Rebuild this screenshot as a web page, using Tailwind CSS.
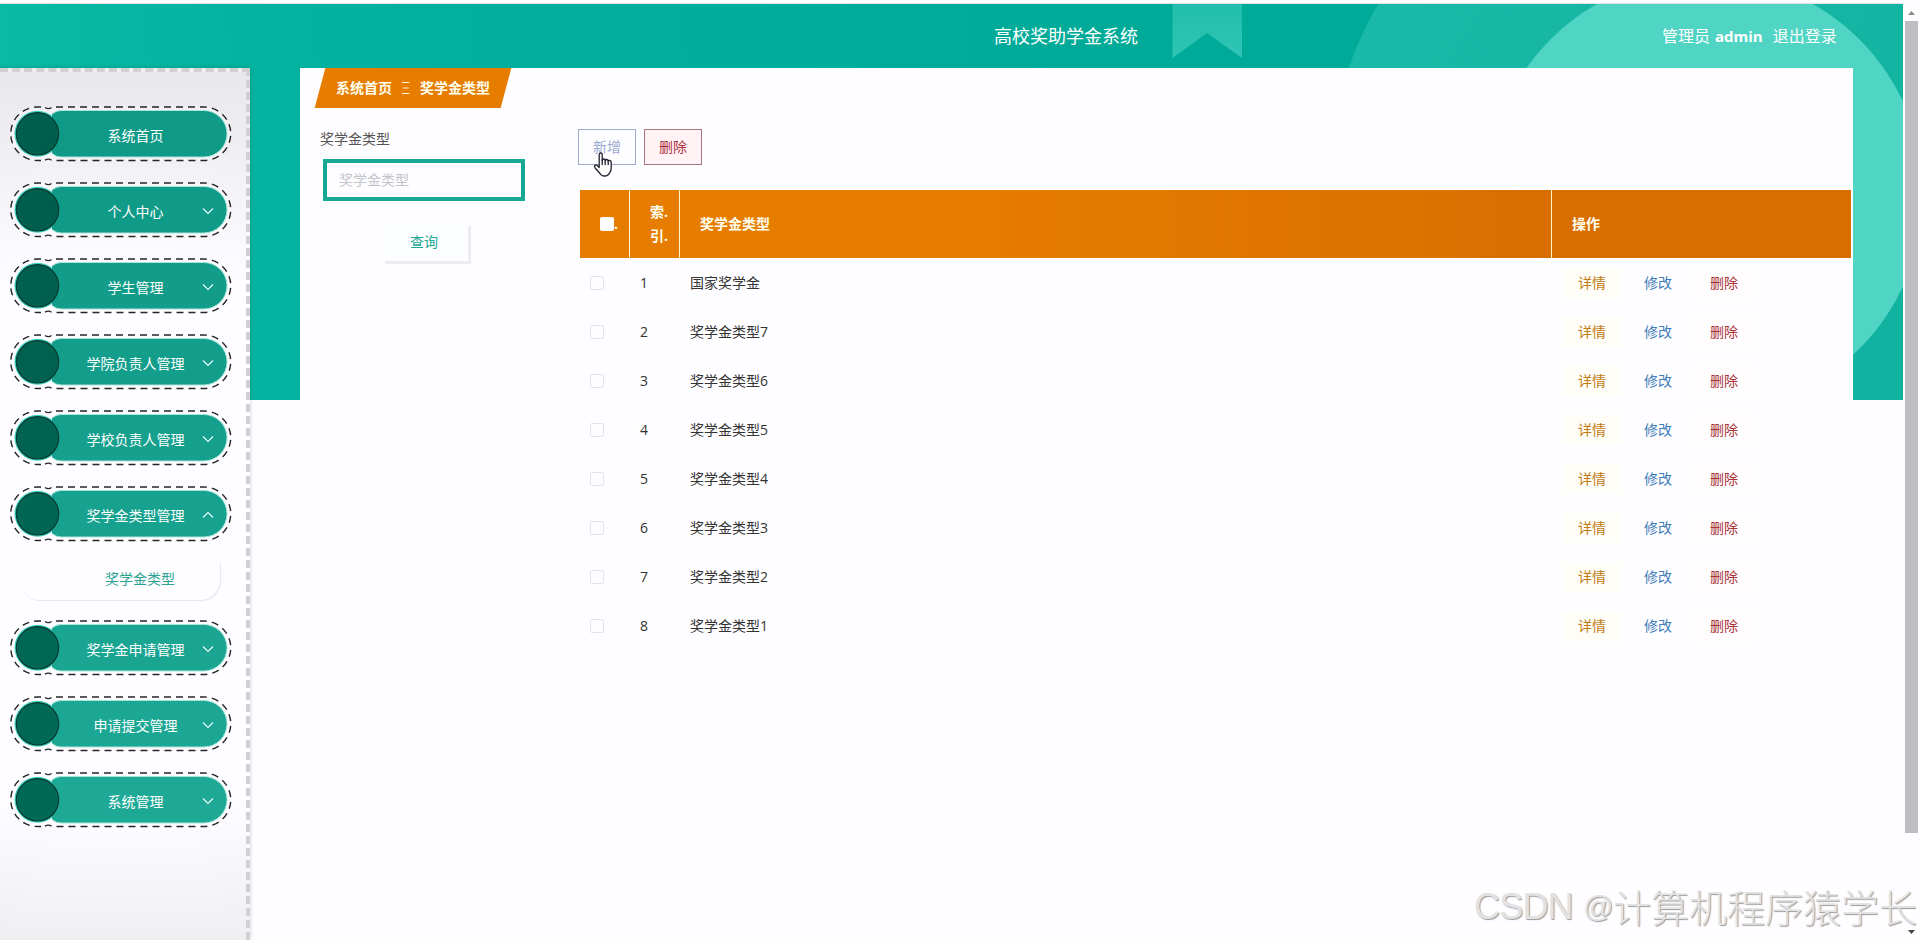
<!DOCTYPE html>
<html lang="zh-CN">
<head>
    <meta charset="UTF-8">
    <meta name="viewport" content="width=device-width, initial-scale=1.0">
    <title>高校奖助学金系统</title>
    <script src="https://cdn.jsdelivr.net/npm/@tailwindcss/browser@4"></script>
    <style>
        body {
            font-family: "Open Sans", "Noto Sans CJK SC", sans-serif;
        }
    </style>
</head>
<body class="relative h-[940px] w-[1920px] overflow-hidden bg-[#fefdff] text-sm text-[#333]">
    <!-- 背景 -->
    <svg class="absolute left-0 top-0" width="1903" height="400" viewBox="0 0 1903 400">
        <defs>
            <linearGradient id="bg" gradientUnits="userSpaceOnUse" x1="0" y1="100" x2="1400" y2="0">
                <stop offset="0" stop-color="#09baa5"/>
                <stop offset=".25" stop-color="#02b19e"/>
                <stop offset=".8" stop-color="#00aa98"/>
                <stop offset="1" stop-color="#00aa98"/>
            </linearGradient>
            <linearGradient id="big" gradientUnits="userSpaceOnUse" x1="1350" y1="0" x2="1903" y2="300">
                <stop offset="0" stop-color="#1bb9a7"/>
                <stop offset="1" stop-color="#11b3a0"/>
            </linearGradient>
            <linearGradient id="flag" x1="0" y1="0" x2="0" y2="1">
                <stop offset="0" stop-color="#22bdac"/>
                <stop offset="1" stop-color="#2fc5b4"/>
            </linearGradient>
            <clipPath id="clip"><rect y="4" width="1903" height="396"/></clipPath>
        </defs>
        <rect y="3" width="1903" height="1" fill="#dfe3e3"/>
        <g clip-path="url(#clip)">
            <rect y="4" width="1903" height="396" fill="url(#bg)"/>
            <path d="M1172.5 4H1242V58L1207 33L1172.5 58Z" fill="url(#flag)"/>
            <circle cx="1705" cy="194" r="378" fill="url(#big)"/>
            <circle cx="1705" cy="194" r="218.5" fill="#50d4c4"/>
        </g>
    </svg>

    <!-- 顶部 -->
    <header class="relative flex h-[68px] items-start pl-[994px] pt-6 leading-6 text-white">
        <h1 class="w-[668px] text-lg leading-6">高校奖助学金系统</h1>
        <div class="flex text-base leading-6">
            <span class="mr-[5px]">管理员</span>
            <span class="mr-[10px] text-[15px] font-bold">admin</span>
            <a>退出登录</a>
        </div>
    </header>

    <div class="relative flex h-[872px]">
        <!-- 侧边栏 -->
        <aside class="h-[872px] w-[250px] border-r-4 border-t-4 border-dashed border-[#d2d0d2] bg-[radial-gradient(ellipse_700px_440px_at_50%_54%,#fefdff_60%,#e4e2e4_118%)] pl-[10px] pt-[34px] shadow-[0_0_4px_rgba(0,0,0,0.2)]">
            <nav id="menu" class="flex flex-col gap-5"></nav>
        </aside>

        <!-- 内容 -->
        <main class="ml-[50px] h-[872px] w-[1553px] bg-[#fefdff]">
            <div class="ml-5 flex h-10 w-[186px] -skew-x-15 items-center bg-[#e67d00] pl-4 font-bold text-[#fffef0]">
                <div class="flex skew-x-15 items-center">
                    <span>系统首页</span>
                    <svg class="mx-[10px]" width="8" height="12" viewBox="0 0 8 12" stroke="#fff6d0" fill="none"><path d="M0 .5H7.5M1 6H6.5M0 11.5H7.5"/></svg>
                    <span>奖学金类型</span>
                </div>
            </div>

            <div class="flex">
                <form class="flex w-[278px] flex-col pl-5 pt-5">
                    <label class="leading-[22px] text-[#555]">奖学金类型</label>
                    <input type="text" placeholder="奖学金类型" class="ml-[3px] mt-[9px] h-[42px] w-[202px] border-4 border-[#14a895] bg-transparent px-3 pb-px text-sm placeholder:text-[#c3c3cb]">
                    <button type="button" class="ml-[62px] mt-[22px] h-[38px] w-[86px] bg-[#fdfeff] pb-px pr-[2px] text-[#1ca695] shadow-[3px_3px_0_#ededef]">查询</button>
                </form>

                <section class="pt-[21px]">
                    <div class="relative flex gap-2">
                        <button class="h-9 w-[58px] border border-[#a0abcb] text-[#9caad3]">新增</button>
                        <button class="h-9 w-[58px] border border-[#a9757f] bg-[#fff3f6] text-[#ad2f3d]">删除</button>
                        <!-- 鼠标指针 -->
                        <svg class="absolute left-4 top-[23px]" width="20" height="26" viewBox="0 0 20 26" fill="#fff" stroke="#22222e" stroke-width="1.3" stroke-linejoin="round" stroke-linecap="round">
                            <path d="M5.2 15.5V2.6Q5.3 1 6.7 1T8.2 2.6V8.5Q8.2 7 9.7 7T11.2 8.7Q11.3 7.5 12.7 7.5T14.2 9.3Q14.4 8.4 15.6 8.4T17.2 10V16Q17.2 19 15.8 20.5Q14.3 24 10.5 24Q7.4 24 6 21.5L1.4 16.2Q-.2 14 1.2 13.2T4 14.3Z"/>
                            <path d="M8.2 8V12.5M11.2 8.7V12.5M14.2 9.3V12.5" fill="none"/>
                        </svg>
                    </div>

                    <table class="ml-[2px] mt-[25px] w-[1271px] table-fixed border-separate border-spacing-0 text-left">
                        <colgroup>
                            <col class="w-[50px]"><col class="w-[50px]"><col class="w-[872px]"><col class="w-[299px]">
                        </colgroup>
                        <thead>
                            <tr class="h-[68px] bg-linear-to-r from-[#e67d00] from-30% to-[#d86d00] to-80% font-bold leading-6 text-[#fffef0]">
                                <th class="border-r border-[#fff3c8] pl-5"><div class="flex items-center"><span class="size-[14px] rounded-xs bg-white"></span>.</div></th>
                                <th class="border-r border-[#fff3c8] pl-5">索.<br>引.</th>
                                <th class="border-r border-[#fff3c8] pl-5">奖学金类型</th>
                                <th class="pl-5">操作</th>
                            </tr>
                        </thead>
                        <tbody id="rows"></tbody>
                    </table>
                </section>
            </div>
        </main>
    </div>

    <!-- 滚动条 -->
    <div class="absolute right-0 top-1 flex h-[936px] w-[17px] flex-col items-center bg-[#fefdff] pt-[7px]">
        <svg width="9" height="5" viewBox="0 0 9 5"><path d="M4.5 0L8 4H1Z" fill="#888"/></svg>
        <div class="mt-[5px] h-[812px] w-[13px] bg-[#bfbdc0]"></div>
        <svg class="mt-[97px]" width="9" height="5" viewBox="0 0 9 5"><path d="M1 0H8L4.5 4Z" fill="#444"/></svg>
    </div>

    <!-- 水印 -->
    <div class="absolute left-[1474px] top-[883px] flex items-center whitespace-nowrap leading-[48px] text-[#e2e2e3] [text-shadow:1px_1px_1px_#999]">
        <span class="w-[109px] font-['Liberation_Sans'] text-[36px] tracking-[-0.8px]">CSDN</span>
        <span class="w-[30px] font-['Liberation_Sans'] text-[30px]">@</span>
        <span class="text-[38px] font-light">计算机程序猿学长</span>
    </div>

    <script>
        const menus = [
            { name: '系统首页', color: '#0e9a87', dot: '#005f4c' },
            { name: '个人中心', color: '#0f9b88', dot: '#005f4c', arrow: 'down' },
            { name: '学生管理', color: '#129d8a', dot: '#00604d', arrow: 'down' },
            { name: '学院负责人管理', color: '#139e8b', dot: '#00614e', arrow: 'down' },
            { name: '学校负责人管理', color: '#159f8d', dot: '#006350', arrow: 'down' },
            { name: '奖学金类型管理', color: '#17a18f', dot: '#006552', arrow: 'up', child: '奖学金类型' },
            { name: '奖学金申请管理', color: '#1aa592', dot: '#006754', arrow: 'down' },
            { name: '申请提交管理', color: '#1ca794', dot: '#006855', arrow: 'down' },
            { name: '系统管理', color: '#1ea996', dot: '#006956', arrow: 'down' }
        ];
        const arrows = { down: 'M193 26.5L198 31.5L203 26.5', up: 'M193 31.5L198 26.5L203 31.5' };

        document.getElementById('menu').innerHTML = menus.map(m => `
            <a class="relative flex h-[56px] w-[222px] items-center justify-center">
                <svg class="absolute inset-0" width="222" height="56" viewBox="0 0 222 56" fill="none">
                    <path d="M27.5 1H194A26.75 26.75 0 0 1 194 54.5H27.5A26.75 26.75 0 0 1 27.5 1Z" fill="#fefdff" opacity=".4"/>
                    <path d="M46 1H194A26.75 26.75 0 0 1 194 54.5H46" stroke="#25252a" stroke-width="1.4" stroke-dasharray="7 5"/>
                    <path d="M41.5 1.5Q38.5 3.8 35 1.5M41.5 54.2Q38.5 52 35 54.2" stroke="#25252a" stroke-width="1.4"/>
                    <path d="M31 1H27.5A26.75 26.75 0 0 0 27.5 54.5H31" stroke="#25252a" stroke-width="1.4" stroke-dasharray="7 5"/>
                    <circle cx="27.5" cy="27.8" r="23" fill="#3bd0bd"/>
                    <path d="M42 8Q46 4.500 51 4.500H193.800A23.250 23.250 0 0 1 193.800 51H51Q46 51 42 47.500" fill="${m.color}" stroke="#a5e5da"/>
                    <circle cx="27.5" cy="27.8" r="21.2" fill="${m.dot}" stroke="#073a31" stroke-width="1.2"/>
                    ${m.arrow ? `<path d="${arrows[m.arrow]}" stroke="#e4faf5" stroke-width="1.2"/>` : ''}
                </svg>
                <span class="relative ml-[29px] mt-[3px] text-white">${m.name}</span>
            </a>
            ${m.child ? `<a class="ml-[10px] flex h-[38px] w-[200px] items-center justify-center rounded-b-[20px] pb-[5px] pl-10 text-[#2ca391] shadow-[1px_1px_1px_#e8e6e8]">${m.child}</a>` : ''}
        `).join('');

        const names = ['国家奖学金', '奖学金类型7', '奖学金类型6', '奖学金类型5', '奖学金类型4', '奖学金类型3', '奖学金类型2', '奖学金类型1'];

        document.getElementById('rows').innerHTML = names.map((name, i) => `
            <tr class="h-[49px]">
                <td class="pl-[10px]"><div class="size-[14px] rounded-xs border border-[#e6e4e9]"></div></td>
                <td class="pl-[10px]">${i + 1}</td>
                <td class="pl-[10px]">${name}</td>
                <td class="pl-[10px]">
                    <div class="flex gap-[6px] leading-[30px]">
                        <span class="w-[60px] bg-[#fffdf8] text-center text-[#c07c13]">详情</span>
                        <span class="w-[60px] text-center text-[#3f7db8]">修改</span>
                        <span class="w-[60px] bg-[#fffcfe] text-center text-[#a83236]">删除</span>
                    </div>
                </td>
            </tr>
        `).join('');
    </script>
</body>
</html>
